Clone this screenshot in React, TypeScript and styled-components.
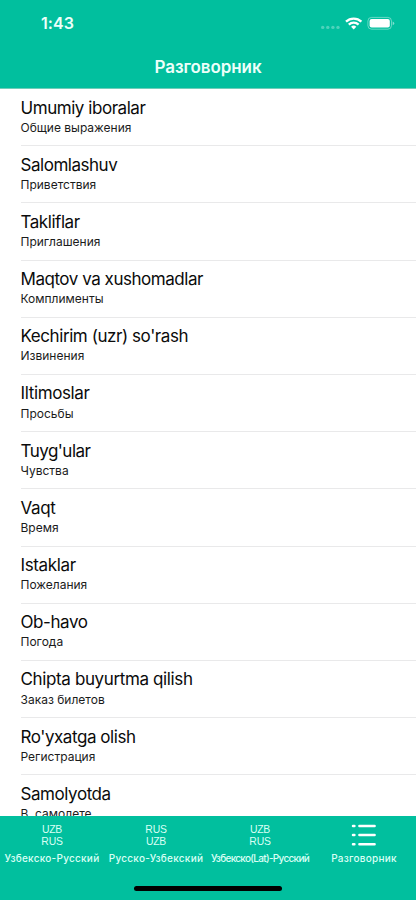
import React from "react";
import styled, { createGlobalStyle } from "styled-components";

const GREEN = "#01bf9e";

const GlobalStyle = createGlobalStyle`
  * { box-sizing: border-box; }
  html, body { margin: 0; padding: 0; background: #fff; overflow: hidden; }
  body { font-family: Inter, "Noto Sans", sans-serif; }
`;

const Screen = styled.div`
  display: flex;
  flex-direction: column;
  width: 416px;
  height: 900px;
  overflow: hidden;
  background: #fff;
`;

const Header = styled.header`
  flex: 0 0 88.5px;
  background: ${GREEN};
  color: #edfffa;
  border-bottom: 0.5px solid #6fcdb9;
`;

const StatusBar = styled.div`
  display: flex;
  align-items: center;
  justify-content: space-between;
  height: 45px;
  padding: 0 21px 0 41px;
`;

const Clock = styled.time`
  font-size: 16px;
  font-weight: 600;
  line-height: 20px;
  letter-spacing: 0.05px;
`;

const StatusIcons = styled.svg`
  display: block;
  width: 76px;
  height: 16px;
`;

const NavTitle = styled.h1`
  margin: 0;
  height: 43px;
  line-height: 45px;
  text-align: center;
  font-size: 17px;
  font-weight: 600;
  letter-spacing: -0.1px;
`;

const List = styled.ul`
  flex: 1;
  min-height: 0;
  margin: 0;
  padding: 0 0 0 20.5px;
  list-style: none;
  overflow: hidden;
`;

const Row = styled.li`
  height: 57.2px;
  padding-top: 7.5px;
  border-bottom: 1px solid #e9e9ea;
  white-space: nowrap;
`;

const Phrase = styled.div<{ $track: number }>`
  height: 22.2px;
  line-height: 22px;
  font-size: 17px;
  color: #0b0b0b;
  letter-spacing: ${(p) => p.$track}px;
`;

const Translation = styled.div`
  height: 18px;
  line-height: 18px;
  font-size: 12px;
  color: #1b1b1b;
`;

const TabBar = styled.nav`
  flex: 0 0 84px;
  display: grid;
  grid-template-columns: repeat(4, 104px);
  grid-template-rows: 66px 18px;
  background: ${GREEN};
  color: #d9fff5;
`;

const Tab = styled.div`
  display: flex;
  flex-direction: column;
  align-items: center;
  padding-top: 7px;
  min-width: 0;
  white-space: nowrap;
`;

const TabCodes = styled.div`
  height: 28px;
  padding-top: 1px;
  font-family: "Liberation Sans", Arial, sans-serif;
  font-size: 10.4px;
  line-height: 12px;
  letter-spacing: -0.2px;
  text-align: center;
`;

const TabLabel = styled.div<{ $track: number }>`
  height: 14px;
  line-height: 14px;
  font-size: 10px;
  font-weight: 500;
  letter-spacing: ${(p) => p.$track}px;
`;

const ListIcon = styled.svg`
  display: block;
  width: 26px;
  height: 28px;
`;

const HomeIndicator = styled.div`
  grid-column: 1 / -1;
  justify-self: center;
  margin-top: 4.2px;
  width: 148px;
  height: 5px;
  border-radius: 3px;
  background: #000;
`;

const phrases: { uz: string; ru: string; track: number }[] = [
  { uz: "Umumiy iboralar", ru: "Общие выражения", track: -0.45 },
  { uz: "Salomlashuv", ru: "Приветствия", track: -0.47 },
  { uz: "Takliflar", ru: "Приглашения", track: -0.45 },
  { uz: "Maqtov va xushomadlar", ru: "Комплименты", track: -0.46 },
  { uz: "Kechirim (uzr) so'rash", ru: "Извинения", track: -0.43 },
  { uz: "Iltimoslar", ru: "Просьбы", track: -0.37 },
  { uz: "Tuyg'ular", ru: "Чувства", track: -0.53 },
  { uz: "Vaqt", ru: "Время", track: -0.35 },
  { uz: "Istaklar", ru: "Пожелания", track: -0.37 },
  { uz: "Ob-havo", ru: "Погода", track: -0.42 },
  { uz: "Chipta buyurtma qilish", ru: "Заказ билетов", track: -0.37 },
  { uz: "Ro'yxatga olish", ru: "Регистрация", track: -0.44 },
  { uz: "Samolyotda", ru: "В  самолете", track: -0.43 },
];

const tabs = [
  { codes: ["UZB", "RUS"], label: "Узбекско-Русский", track: 0.26 },
  { codes: ["RUS", "UZB"], label: "Русско-Узбекский", track: 0.26 },
  { codes: ["UZB", "RUS"], label: "Узбекско(Lat)-Русский", track: -0.7 },
  { codes: null, label: "Разговорник", track: 0.25 },
];

export default function App() {
  return (
    <>
      <GlobalStyle />
      <Screen>
        <Header>
          <StatusBar>
            <Clock>1:43</Clock>
            <StatusIcons viewBox="0 0 76 16">
              <g fill="#fff" opacity="0.3">
                <circle cx="3.7" cy="12.4" r="1.7" />
                <circle cx="8.8" cy="12.4" r="1.7" />
                <circle cx="13.9" cy="12.4" r="1.7" />
                <circle cx="19" cy="12.4" r="1.7" />
              </g>
              <g fill="none" stroke="#fff" strokeWidth="2.3">
                <path d="M27 6.6a11.2 11.2 0 0 1 15.4 0" />
                <path d="M29.8 9.6a7.1 7.1 0 0 1 9.8 0" />
              </g>
              <path d="M32.1 11.7a3.9 3.9 0 0 1 5.2 0L34.7 14.4z" fill="#fff" />
              <rect x="48.9" y="2.4" width="23.6" height="11.8" rx="3.7" fill="none" stroke="#fff" strokeOpacity="0.4" />
              <rect x="50.6" y="4.1" width="20.2" height="8.4" rx="2" fill="#fff" />
              <path d="M73.7 6.4q1.5.5 1.5 1.9t-1.5 1.9z" fill="#fff" opacity="0.5" />
            </StatusIcons>
          </StatusBar>
          <NavTitle>Разговорник</NavTitle>
        </Header>
        <List>
          {phrases.map((p) => (
            <Row key={p.uz}>
              <Phrase $track={p.track}>{p.uz}</Phrase>
              <Translation>{p.ru.replace(/ /g, "\u00a0")}</Translation>
            </Row>
          ))}
        </List>
        <TabBar>
          {tabs.map((t) => (
            <Tab key={t.label}>
              {t.codes ? (
                <TabCodes>
                  {t.codes[0]}
                  <br />
                  {t.codes[1]}
                </TabCodes>
              ) : (
                <ListIcon viewBox="0 0 26 28" fill="none" stroke="#fff" strokeWidth="2.5" strokeLinecap="round">
                  <path d="M2 3h1.4M8.4 3H23.6M2 12h1.4M8.4 12H23.6M2 21.3h1.4M8.4 21.3H23.6" />
                </ListIcon>
              )}
              <TabLabel $track={t.track}>{t.label}</TabLabel>
            </Tab>
          ))}
          <HomeIndicator />
        </TabBar>
      </Screen>
    </>
  );
}
